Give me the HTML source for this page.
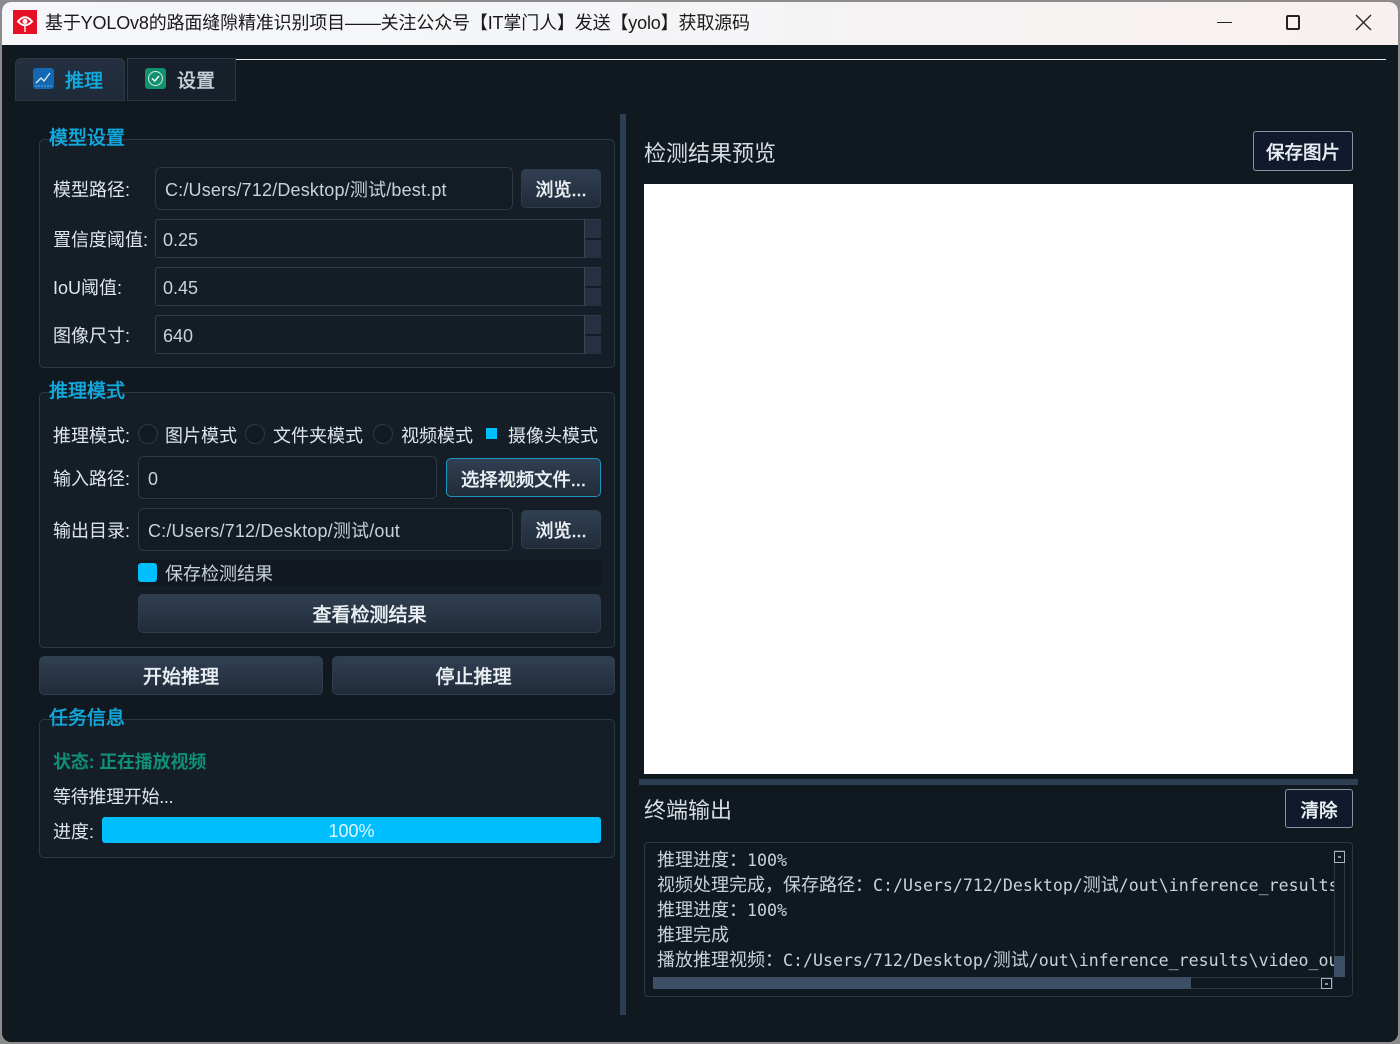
<!DOCTYPE html>
<html><head><meta charset="utf-8">
<style>
*{box-sizing:border-box;margin:0;padding:0}
html,body{width:1400px;height:1044px;overflow:hidden;background:#8d8a8c}
body{position:relative;font-family:"Liberation Sans","Noto Sans CJK SC",sans-serif;font-size:18px;color:#dfe6ec}
.a{position:absolute}
.t{position:absolute;white-space:nowrap;line-height:24px;height:24px}
.win{position:absolute;left:2px;top:2px;width:1396px;height:1040px;background:#101820;border-radius:9px;overflow:hidden}
.bar{position:absolute;left:2px;top:2px;width:1396px;height:43px;background:linear-gradient(90deg,#f5f7fa 0,#f4f5f8 40%,#f8f0ee 100%);border-radius:9px 9px 0 0}
.group{position:absolute;left:39px;width:576px;border:1px solid #2c3846;border-radius:5px;background:#151d27}
.gt{position:absolute;left:49px;color:#12a9dd;font-size:19px;-webkit-text-stroke:.6px #12a9dd;line-height:24px;white-space:nowrap}
.inp{position:absolute;height:43px;background:#131b25;border:1px solid #2c3846;border-radius:6px;line-height:45px;padding-left:9px;color:#c9d2da;white-space:nowrap;letter-spacing:.18px}
.spin{position:absolute;left:155px;width:446px;height:39px;background:#141c26;border:1px solid #313d4b;border-right:none;border-radius:3px 0 0 3px;line-height:41px;padding-left:7px;color:#c9d2da}
.spin:after{content:"";position:absolute;right:16px;top:0;bottom:0;width:1px;background:#3a4756}
.sb{position:absolute;right:0;width:16px;height:18px;background:#253141}
.btn{position:absolute;background:linear-gradient(180deg,#303f52,#212c3a);border:1px solid #2f3c4c;border-radius:5px;text-align:center;color:#e9eef2;font-size:19px;-webkit-text-stroke:.6px #e9eef2;white-space:nowrap;line-height:41px;height:39px}
.out{position:absolute;background:#111a2c;border:1px solid #8a93a1;border-radius:3px;text-align:center;color:#e9eef2;font-size:18.500px;-webkit-text-stroke:.6px #e9eef2}
.radio{position:absolute;width:20px;height:20px;border:1px solid #2e3946;border-radius:50%;background:#121a23}
.mono{position:absolute;left:657px;width:680px;overflow:hidden;white-space:nowrap;height:25px;line-height:25px;font-family:"DejaVu Sans Mono","Noto Sans CJK SC",monospace;font-size:16.600px;color:#c9d2da}
.mono b{font-family:"Noto Sans CJK SC",sans-serif;font-size:18px;font-weight:normal}
.arrow{position:absolute;width:11px;height:12px;border:1px solid #aab2bc;background:#0f1722}
.arrow:after{content:"";position:absolute;left:3px;top:4px;width:3px;height:2px;background:#8a939e}
</style></head><body>
<div class="win"></div>
<div class="bar"></div>
<svg class="a" style="left:13px;top:10px" width="24" height="24" viewBox="0 0 24 24"><rect width="24" height="24" fill="#e60f25"/><path d="M5 11.500Q12 3 19 11.500Q12 19 5 11.500Z" fill="none" stroke="#fff" stroke-width="2"/><circle cx="12" cy="11.500" r="2.500" fill="#fff"/><path d="M12 16v6" stroke="#fff" stroke-width="1.300"/></svg>
<div class="t" style="left:45px;top:11px;color:#1a1a1a;letter-spacing:-.16px">基于YOLOv8的路面缝隙精准识别项目——关注公众号【IT掌门人】发送【yolo】获取源码</div>
<div class="a" style="left:1217px;top:22px;width:15px;height:1px;background:#222"></div>
<div class="a" style="left:1286px;top:15px;width:14px;height:15px;border:2px solid #222;border-radius:2px"></div>
<svg class="a" style="left:1355px;top:14px" width="17" height="17" viewBox="0 0 17 17"><path d="M1 1L16 16M16 1L1 16" stroke="#222" stroke-width="1.300"/></svg>

<div class="a" style="left:235px;top:59px;width:1151px;height:1px;background:#e8ecef"></div>
<div class="a" style="left:15px;top:58px;width:110px;height:43px;background:linear-gradient(180deg,#243040,#1f2a38);border:1px solid #2c3846;border-radius:6px 6px 0 0"></div>
<div class="a" style="left:127px;top:58px;width:109px;height:43px;background:#171f2a;border:1px solid #2c3846"></div>
<svg class="a" style="left:33px;top:68px" width="21" height="21" viewBox="0 0 21 21"><rect width="21" height="21" rx="3" fill="#1268b3"/><path d="M3 15L8 10L11 13L17 5" fill="none" stroke="#e6f1fa" stroke-width="1.300"/><path d="M2 18H19" stroke="#6aa6d8" stroke-width="1" stroke-dasharray="2 1"/></svg>
<svg class="a" style="left:145px;top:68px" width="21" height="21" viewBox="0 0 21 21"><rect width="21" height="21" rx="3" fill="#12906f"/><circle cx="10.500" cy="10.500" r="7" fill="none" stroke="#cfeee5" stroke-width="1"/><path d="M7 10.500L9.800 13L14 8" fill="none" stroke="#fff" stroke-width="1.400"/></svg>
<div class="t" style="left:65px;top:70px;color:#12a9dd;font-size:19px;-webkit-text-stroke:.6px #12a9dd">推理</div>
<div class="t" style="left:177px;top:70px;color:#c7cfd7;font-size:19px;-webkit-text-stroke:.6px #c7cfd7">设置</div>

<!-- 模型设置 -->
<div class="group" style="top:139px;height:229px"></div>
<div class="gt" style="top:127px">模型设置</div>
<div class="t" style="left:53px;top:178px">模型路径:</div>
<div class="inp" style="left:155px;top:167px;width:358px">C:/Users/712/Desktop/测试/best.pt</div>
<div class="btn" style="left:521px;top:169px;width:80px;font-size:18px">浏览...</div>
<div class="t" style="left:53px;top:228px">置信度阈值:</div>
<div class="spin" style="top:219px">0.25<div class="sb" style="top:0"></div><div class="sb" style="top:20px"></div></div>
<div class="t" style="left:53px;top:276px">IoU阈值:</div>
<div class="spin" style="top:267px">0.45<div class="sb" style="top:0"></div><div class="sb" style="top:20px"></div></div>
<div class="t" style="left:53px;top:324px">图像尺寸:</div>
<div class="spin" style="top:315px">640<div class="sb" style="top:0"></div><div class="sb" style="top:20px"></div></div>

<!-- 推理模式 -->
<div class="group" style="top:392px;height:256px"></div>
<div class="gt" style="top:380px">推理模式</div>
<div class="t" style="left:53px;top:424px">推理模式:</div>
<div class="radio" style="left:138px;top:424px"></div>
<div class="t" style="left:165px;top:424px">图片模式</div>
<div class="radio" style="left:245px;top:424px"></div>
<div class="t" style="left:273px;top:424px">文件夹模式</div>
<div class="radio" style="left:373px;top:424px"></div>
<div class="t" style="left:401px;top:424px">视频模式</div>
<div class="a" style="left:486px;top:428px;width:11px;height:11px;background:#00bfff"></div>
<div class="t" style="left:508px;top:424px">摄像头模式</div>
<div class="t" style="left:53px;top:467px">输入路径:</div>
<div class="inp" style="left:138px;top:456px;width:299px">0</div>
<div class="btn" style="left:446px;top:458px;width:155px;border-color:#1f93c4;font-size:18.300px">选择视频文件...</div>
<div class="t" style="left:53px;top:519px">输出目录:</div>
<div class="inp" style="left:138px;top:508px;width:375px">C:/Users/712/Desktop/测试/out</div>
<div class="btn" style="left:521px;top:510px;width:80px;font-size:18px">浏览...</div>
<div class="a" style="left:138px;top:560px;width:463px;height:26px;background:#111820"></div>
<div class="a" style="left:138px;top:563px;width:19px;height:19px;background:#00bfff;border-radius:3px"></div>
<div class="t" style="left:165px;top:562px;color:#c9d2da">保存检测结果</div>
<div class="btn" style="left:138px;top:594px;width:463px">查看检测结果</div>

<div class="btn" style="left:39px;top:656px;width:284px">开始推理</div>
<div class="btn" style="left:332px;top:656px;width:283px">停止推理</div>

<!-- 任务信息 -->
<div class="group" style="top:719px;height:139px"></div>
<div class="gt" style="top:707px">任务信息</div>
<div class="t" style="left:53px;top:750px;color:#0f8f78;font-weight:bold;letter-spacing:-.2px">状态: 正在播放视频</div>
<div class="t" style="left:53px;top:785px;letter-spacing:-.3px">等待推理开始...</div>
<div class="t" style="left:53px;top:820px">进度:</div>
<div class="a" style="left:102px;top:817px;width:499px;height:26px;background:#00bfff;border-radius:3px;text-align:center;line-height:28px;color:#dff6ff">100%</div>

<!-- splitter -->
<div class="a" style="left:620px;top:114px;width:6px;height:901px;background:#2c3e52"></div>

<!-- right -->
<div class="t" style="left:644px;top:140px;font-size:22px;line-height:28px;height:28px;color:#d5dce2">检测结果预览</div>
<div class="out" style="left:1253px;top:131px;width:100px;height:40px;line-height:42px">保存图片</div>
<div class="a" style="left:644px;top:184px;width:709px;height:590px;background:#fff"></div>
<div class="a" style="left:639px;top:779px;width:719px;height:6px;background:#2c3e52"></div>
<div class="t" style="left:644px;top:797px;font-size:22px;line-height:28px;height:28px;color:#d5dce2">终端输出</div>
<div class="out" style="left:1285px;top:789px;width:68px;height:39px;line-height:41px">清除</div>

<div class="a" style="left:644px;top:842px;width:709px;height:155px;background:#101820;border:1px solid #2c3846;border-radius:4px"></div>
<div class="mono" style="top:847px"><b>推理进度：</b>100%</div>
<div class="mono" style="top:872px"><b>视频处理完成，保存路径：</b>C:/Users/712/Desktop/<b>测试</b>/out\inference_results\video</div>
<div class="mono" style="top:897px"><b>推理进度：</b>100%</div>
<div class="mono" style="top:922px"><b>推理完成</b></div>
<div class="mono" style="top:947px"><b>播放推理视频：</b>C:/Users/712/Desktop/<b>测试</b>/out\inference_results\video_out</div>

<!-- scrollbars -->
<div class="a" style="left:1334px;top:850px;width:11px;height:127px;background:#101820;border:1px solid #2c3846"></div>
<div class="a" style="left:1334px;top:956px;width:11px;height:21px;background:#3d4f66"></div>
<div class="arrow" style="left:1334px;top:851px"></div>
<div class="a" style="left:653px;top:977px;width:680px;height:12px;background:#101820;border:1px solid #2c3846"></div>
<div class="a" style="left:653px;top:977px;width:538px;height:12px;background:#3d4f66"></div>
<div class="arrow" style="left:1321px;top:978px;height:11px"></div>
</body></html>
